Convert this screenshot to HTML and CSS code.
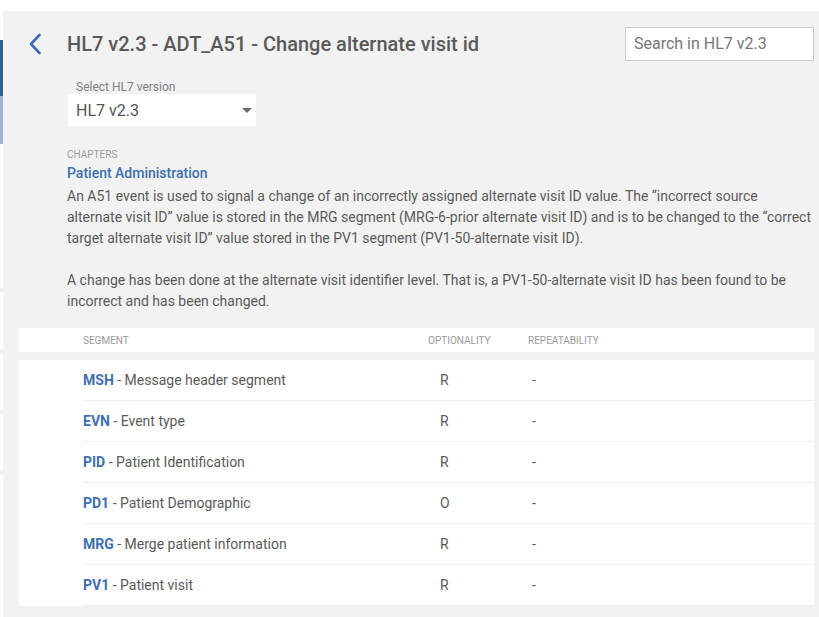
FILE: index.html
```html
<!DOCTYPE html>
<html lang="en">
<head>
<meta charset="utf-8">
<title>HL7 v2.3 - ADT_A51</title>
<link rel="stylesheet" href="styles.css">
</head>
<body>
<div class="app">
  <div class="rail">
    <div class="rail-gap rail-gap-top"></div>
    <div class="rail-active"></div>
    <div class="rail-sub"></div>
    <div class="rail-gap rail-gap-mid"></div>
    <div class="rail-line"></div>
    <div class="rail-gap rail-gap-item"></div>
    <div class="rail-line"></div>
    <div class="rail-gap rail-gap-item"></div>
    <div class="rail-line"></div>
    <div class="rail-gap rail-gap-item"></div>
    <div class="rail-line"></div>
  </div>
  <main class="panel">
    <header class="header">
      <a class="back" href="#" aria-label="Back">
        <svg width="16" height="22" viewBox="0 0 16 22"><path d="M11.5 2 L3 11 L11.5 20" fill="none" stroke="#3b6fb3" stroke-width="2.6" stroke-linecap="round" stroke-linejoin="round"/></svg>
      </a>
      <h1 class="title">HL7 v2.3 - ADT_A51 - Change alternate visit id</h1>
      <div class="search">Search in HL7 v2.3</div>
    </header>

    <section class="version">
      <div class="version-label">Select HL7 version</div>
      <div class="select">
        <span class="select-value">HL7 v2.3</span>
        <span class="select-caret"></span>
      </div>
    </section>

    <section class="intro">
      <div class="chapters-label">CHAPTERS</div>
      <div class="chapter">Patient Administration</div>
      <p class="desc">An A51 event is used to signal a change of an incorrectly assigned alternate visit ID value. The “incorrect source alternate visit ID” value is stored in the MRG segment (MRG-6-prior alternate visit ID) and is to be changed to the “correct target alternate visit ID” value stored in the PV1 segment (PV1-50-alternate visit ID).<br><br>A change has been done at the alternate visit identifier level. That is, a PV1-50-alternate visit ID has been found to be incorrect and has been changed.</p>
    </section>

    <section class="table">
      <div class="thead">
        <div class="col-seg">SEGMENT</div>
        <div class="col-opt">OPTIONALITY</div>
        <div class="col-rep">REPEATABILITY</div>
      </div>
      <div class="tbody">
        <div class="row"><div class="col-seg"><b>MSH</b> - Message header segment</div><div class="col-opt">R</div><div class="col-rep">-</div></div>
        <div class="row"><div class="col-seg"><b>EVN</b> - Event type</div><div class="col-opt">R</div><div class="col-rep">-</div></div>
        <div class="row"><div class="col-seg"><b>PID</b> - Patient Identification</div><div class="col-opt">R</div><div class="col-rep">-</div></div>
        <div class="row"><div class="col-seg"><b>PD1</b> - Patient Demographic</div><div class="col-opt">O</div><div class="col-rep">-</div></div>
        <div class="row"><div class="col-seg"><b>MRG</b> - Merge patient information</div><div class="col-opt">R</div><div class="col-rep">-</div></div>
        <div class="row"><div class="col-seg"><b>PV1</b> - Patient visit</div><div class="col-opt">R</div><div class="col-rep">-</div></div>
      </div>
    </section>
  </main>
</div>
</body>
</html>
```

FILE: styles.css
```css
* { box-sizing: border-box; }
html, body { margin: 0; padding: 0; background: #ffffff; }
body {
  font-family: Roboto, "Liberation Sans", Arial, sans-serif;
  color: #5a5a5a;
  overflow: hidden;
  height: 617px;
}
.app { display: flex; align-items: flex-start; }

.rail { width: 3px; flex: 0 0 3px; display: flex; flex-direction: column; }
.rail-gap-top { height: 40px; }
.rail-active { height: 56px; background: #2f5d9e; }
.rail-sub { height: 48px; background: #9cb6d9; }
.rail-gap-mid { height: 144px; }
.rail-line { height: 4px; background: #f0f0f0; }
.rail-gap-item { height: 57px; }

.panel {
  flex: 1;
  margin-top: 11px;
  background: #f2f2f2;
  padding: 16px 5px 11px 16px;
  min-height: 606px;
}

.header { display: flex; align-items: center; height: 34px; }
.back { display: flex; width: 16px; margin-left: 9px; margin-right: 23px; }
.title {
  margin: 0;
  flex: 1;
  font-size: 20px;
  font-weight: 500;
  color: #595959;
  letter-spacing: 0;
}
.search {
  width: 189px;
  height: 34px;
  background: #fff;
  border: 1px solid #cccccc;
  padding-left: 8px;
  font-size: 16px;
  line-height: 32px;
  color: #777;
}

.version { margin: 19px 0 0 49px; }
.version-label { font-size: 12px; line-height: 14px; color: #808080; padding-left: 8px; }
.select {
  width: 188px;
  height: 32px;
  background: #fff;
  display: flex;
  align-items: center;
  justify-content: space-between;
  padding: 0 4px 0 8px;
}
.select-value { font-size: 16px; color: #555; }
.select-caret {
  width: 0; height: 0;
  border-left: 5px solid transparent;
  border-right: 5px solid transparent;
  border-top: 5px solid #6b6b6b;
  margin-right: 0;
}

.intro { margin: 23px 0 0 48px; }
.chapters-label { font-size: 10px; line-height: 12px; color: #9a9a9a; }
.chapter { margin-top: 2px; font-size: 14px; line-height: 20px; font-weight: 500; color: #3e6fb1; }
.desc { margin: 3px 0 0 0; font-size: 14px; line-height: 21px; color: #5a5a5a; }

.table { margin-top: 16px; }
.thead {
  display: flex;
  align-items: center;
  height: 24px;
  background: #fff;
  padding-left: 64px;
  font-size: 10px;
  color: #9a9a9a;
}
.tbody { margin-top: 8px; background: #fff; padding-left: 64px; }
.row {
  display: flex;
  align-items: center;
  height: 41px;
  padding-bottom: 1px;
  border-bottom: 1px solid #efefef;
  font-size: 14px;
  color: #5a5a5a;
}
.col-seg { width: 345px; }
.col-opt { width: 100px; }
.col-rep { flex: 1; }
.row .col-opt { padding-left: 12px; }
.row .col-rep { padding-left: 4px; }
.row b { color: #3e6fb1; font-weight: 700; }
```
